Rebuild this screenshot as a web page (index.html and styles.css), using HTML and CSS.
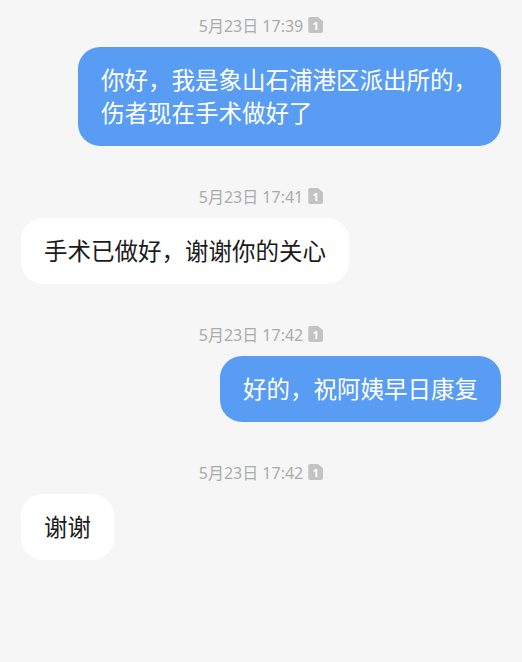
FILE: index.html
```html
<!DOCTYPE html>
<html>
<head>
  <meta charset="utf-8">
  <title>短信</title>
  <link rel="stylesheet" href="styles.css">
</head>
<body>
  <div class="thread">

    <!-- 17:39 -->
    <div class="group">
      <div class="stamp">5月23日 17:39 <span class="sim">1</span></div>
      <div class="bubble sent">你好，我是象山石浦港区派出所的，伤者现在手术做好了</div>
    </div>

    <!-- 17:41 -->
    <div class="group">
      <div class="stamp">5月23日 17:41 <span class="sim">1</span></div>
      <div class="bubble received">手术已做好，谢谢你的关心</div>
    </div>

    <!-- 17:42 -->
    <div class="group">
      <div class="stamp">5月23日 17:42 <span class="sim">1</span></div>
      <div class="bubble sent">好的，祝阿姨早日康复</div>
    </div>

    <!-- 17:42 -->
    <div class="group">
      <div class="stamp">5月23日 17:42 <span class="sim">1</span></div>
      <div class="bubble received">谢谢</div>
    </div>

  </div>
</body>
</html>
```

FILE: styles.css
```css
body {
  margin: 0;
  background-color: #f6f6f6;
  font-family: 'Noto Sans', 'Noto Sans CJK SC', sans-serif;
}
.thread {
  display: flex;
  flex-direction: column;
  padding: 15px 21px 0 21px;
}
.group {
  display: flex;
  flex-direction: column;
  gap: 12px;
  margin-bottom: 40px;
}
.stamp {
  display: flex;
  justify-content: center;
  align-items: center;
  gap: 5px;
  height: 20px;
  font-size: 16px;
  color: #ababab;
}
.sim {
  display: inline-flex;
  justify-content: center;
  align-items: center;
  width: 15px;
  height: 16px;
  background-color: #c3c3c3;
  border-radius: 2px;
  clip-path: polygon(0 0, 65% 0, 100% 28%, 100% 100%, 0 100%);
  color: #fff;
  font-size: 11px;
  font-weight: bold;
  line-height: 1;
}
.bubble {
  max-width: 423px;
  box-sizing: border-box;
  padding: 16.5px 23px;
  border-radius: 22px;
  font-size: 23.5px;
  line-height: 33px;
}
.bubble.sent {
  align-self: flex-end;
  background-color: #589cf4;
  color: #fff;
}
.bubble.received {
  align-self: flex-start;
  background-color: #fff;
  color: #1b1b1b;
}
```
